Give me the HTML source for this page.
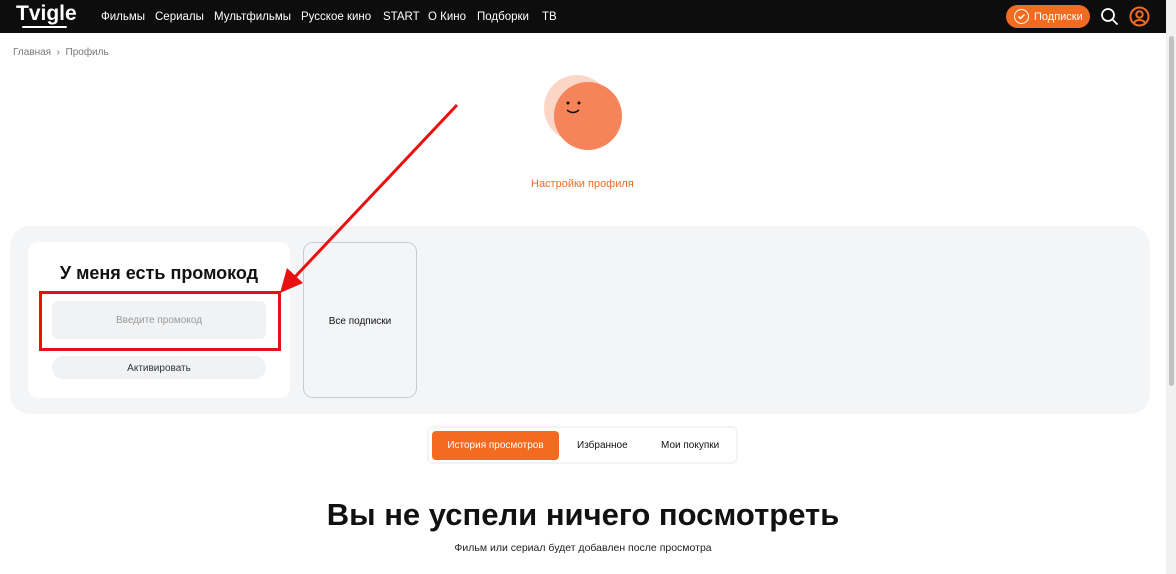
<!DOCTYPE html>
<html><head><meta charset="utf-8"><style>
*{margin:0;padding:0;box-sizing:border-box}
body{width:1176px;height:574px;overflow:hidden;background:#fff;font-family:"Liberation Sans",sans-serif;position:relative;color:#111}
.hdr{position:absolute;left:0;top:0;width:1166px;height:33px;background:#0d0d0d}
.nav{position:absolute;top:10px;font-size:11.5px;color:#fff;white-space:nowrap}
.a{position:absolute}
</style></head><body>
<div class="hdr">
<div class="a" style="left:16px;top:2px;font:bold 21px 'Liberation Sans',sans-serif;color:#fff">Tvigle</div>
<div class="a" style="left:22px;top:26px;width:45px;height:2px;background:#fff;border-radius:2px"></div>
<div class="nav" style="left:101px;top:11px">Фильмы</div>
<div class="nav" style="left:155px;top:11px">Сериалы</div>
<div class="nav" style="left:214px;top:11px">Мультфильмы</div>
<div class="nav" style="left:301px;top:11px">Русское кино</div>
<div class="nav" style="left:383px;top:11px">START</div>
<div class="nav" style="left:428px;top:11px">О Кино</div>
<div class="nav" style="left:477px;top:11px">Подборки</div>
<div class="nav" style="left:542px;top:11px">ТВ</div>
<div class="a" style="left:1006px;top:5px;width:84px;height:23px;background:#f26b21;border-radius:12px"></div>
<div class="a" style="left:1014px;top:9px;width:15px;height:15px;border:1.5px solid #fff;border-radius:50%"></div>
<svg class="a" style="left:1014px;top:9px" width="15" height="15"><path d="M4.5 7.5l2 2 4-4" stroke="#fff" stroke-width="1.5" fill="none"/></svg>
<div class="nav" style="left:1034px;top:11px;font-size:11px">Подписки</div>
<svg class="a" style="left:1100px;top:7px" width="20" height="20"><circle cx="8" cy="8" r="6" stroke="#fff" stroke-width="1.8" fill="none"/><path d="M12.5 12.5l5 5" stroke="#fff" stroke-width="1.8"/></svg>
<svg class="a" style="left:1129px;top:6px" width="21" height="21"><circle cx="10.5" cy="10.5" r="9" stroke="#f26b21" stroke-width="2" fill="none"/><circle cx="10.5" cy="8.5" r="3.2" stroke="#f26b21" stroke-width="2" fill="none"/><path d="M5 17c2-4 9-4 11 0" stroke="#f26b21" stroke-width="2" fill="none"/></svg>
</div>
<div class="a" style="left:1166px;top:0;width:10px;height:574px;background:#f1f1f1"></div>
<div class="a" style="left:1169px;top:36px;width:5px;height:350px;background:#c1c1c1;border-radius:3px"></div>
<div class="a" style="left:13px;top:47px;font-size:10px;color:#777">Главная &nbsp;›&nbsp; Профиль</div>
<svg class="a" style="left:540px;top:72px" width="90" height="90"><circle cx="37" cy="36" r="33" fill="#fbd6c6"/><circle cx="48" cy="44" r="34" fill="#f6845a"/><circle cx="28" cy="31" r="1.5" fill="#111"/><circle cx="39" cy="31" r="1.5" fill="#111"/><path d="M27 38q6 5 12 0" stroke="#111" stroke-width="1.5" fill="none"/></svg>
<div class="a" style="left:531px;top:178px;font-size:11px;color:#f26b21">Настройки профиля</div>
<div class="a" style="left:10px;top:226px;width:1140px;height:188px;background:#f4f5f7;border-radius:20px"></div>
<div class="a" style="left:28px;top:242px;width:262px;height:156px;background:#fff;border-radius:10px"></div>
<div class="a" style="left:28px;top:263px;width:262px;text-align:center;font-size:18px;font-weight:bold">У меня есть промокод</div>
<div class="a" style="left:52px;top:301px;width:214px;height:38px;background:#f1f2f4;border-radius:6px;text-align:center;line-height:40px;font-size:10px;color:#999">Введите промокод</div>
<div class="a" style="left:52px;top:356px;width:214px;height:23px;background:#f1f2f4;border-radius:12px;text-align:center;line-height:25px;font-size:10px;color:#333">Активировать</div>
<div class="a" style="left:303px;top:242px;width:114px;height:156px;border:1px solid #c8ccd2;border-radius:10px;text-align:center;line-height:157px;font-size:10px">Все подписки</div>
<div class="a" style="left:39px;top:291px;width:242px;height:60px;border:3px solid #e81010"></div>
<svg class="a" style="left:0;top:0" width="600" height="400"><path d="M457 105L294 278" stroke="#e81010" stroke-width="3"/><path d="M280 293l7-25 16 15z" fill="#e81010"/></svg>
<div class="a" style="left:427px;top:426px;width:311px;height:38px;background:#fff;border:2px solid #f2f3f5;border-radius:6px"></div>
<div class="a" style="left:432px;top:431px;width:127px;height:29px;background:#f26b21;border-radius:4px;color:#fff;font-size:10px;text-align:center;line-height:30px">История просмотров</div>
<div class="a" style="left:577px;top:440px;font-size:10px">Избранное</div>
<div class="a" style="left:661px;top:440px;font-size:10px">Мои покупки</div>
<div class="a" style="left:0;top:497px;width:1166px;text-align:center;font-size:31px;font-weight:bold">Вы не успели ничего посмотреть</div>
<div class="a" style="left:0;top:542px;width:1166px;text-align:center;font-size:10.5px;color:#222">Фильм или сериал будет добавлен после просмотра</div>
</body></html>
